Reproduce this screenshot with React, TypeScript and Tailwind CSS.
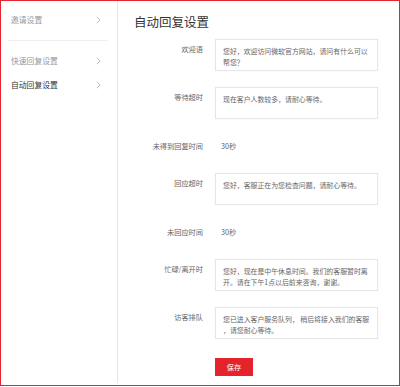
import React from "react";

const font = { fontFamily: '"Noto Sans CJK SC", "Noto Sans", sans-serif' };

function Chevron() {
  return (
    <svg width="5" height="8" viewBox="0 0 5 8" className="shrink-0">
      <polyline points="0.8,0.8 4,4 0.8,7.2" fill="none" stroke="#b8b8b8" strokeWidth="0.9" />
    </svg>
  );
}

function SideItem({ label, active }: { label: string; active?: boolean }) {
  return (
    <div className="flex h-[24px] items-center justify-between pl-[10px] pr-[16px]">
      <span className={`text-[7.8px] leading-[10px] ${active ? "text-[#333]" : "text-[#999]"}`}>{label}</span>
      <Chevron />
    </div>
  );
}

function BoxRow({ label, lines }: { label: string; lines: string[] }) {
  return (
    <div className="flex items-start gap-[12px]">
      <div className="w-[85px] shrink-0 pt-[5px] text-right text-[7.2px] leading-[10px] text-[#666]">{label}</div>
      <div className="box-border h-[32px] w-[163px] border border-[#e6e6e6] bg-white pl-[7px] pr-[4px] pt-[6px] text-[6.9px] leading-[10.5px] text-[#666] shadow-[0_0_2px_rgba(0,0,0,0.04)]">
        {lines.map((l, i) => (
          <div key={i} className="overflow-hidden whitespace-nowrap">{l}</div>
        ))}
      </div>
    </div>
  );
}

function TextRow({ label, value }: { label: string; value: string }) {
  return (
    <div className="flex h-[22px] items-center gap-[12px]">
      <div className="w-[85px] shrink-0 text-right text-[7.2px] leading-[10px] text-[#666]">{label}</div>
      <div className="pl-[6px] text-[7.2px] leading-[10px] text-[#666]">{value}</div>
    </div>
  );
}

export default function App() {
  return (
    <div style={font} className="box-border flex h-[386px] w-[400px] border border-[#e4252d] bg-white">
      <div className="mb-[2px] box-border w-[117px] shrink-0 border-r border-[#e6e6e6] pt-[7px]">
        <SideItem label="邀请设置" />
        <div className="ml-[7px] mr-[9px] mt-[8px] mb-[8px] h-px bg-[#efefef]" />
        <SideItem label="快速回复设置" />
        <SideItem label="自动回复设置" active />
      </div>
      <div className="flex-1">
        <div className="pl-[16px] pt-[13px] text-[12.5px] leading-[16px] text-[#333]">自动回复设置</div>
        <div className="mt-[9px] flex flex-col gap-[16px]">
          <BoxRow label="欢迎语" lines={["您好，欢迎访问微软官方网站，请问有什么可以", "帮您？"]} />
          <BoxRow label="等待超时" lines={["现在客户人数较多，请耐心等待。"]} />
          <TextRow label="未得到回复时间" value="30秒" />
          <BoxRow label="回应超时" lines={["您好，客服正在为您检查问题，请耐心等待。"]} />
          <TextRow label="未回应时间" value="30秒" />
          <BoxRow label="忙碌/离开时" lines={["您好，现在是中午休息时间。我们的客服暂时离", "开。请在下午1点以后前来咨询，谢谢。"]} />
          <BoxRow label="访客排队" lines={["您已进入客户服务队列， 稍后将接入我们的客服", "，请您耐心等待。"]} />
        </div>
        <div className="mt-[19px] pl-[97px]">
          <button className="flex h-[18px] w-[38px] items-center justify-center bg-[#e5232b] text-[7.2px] leading-[10px] text-white">
            保存
          </button>
        </div>
      </div>
    </div>
  );
}
